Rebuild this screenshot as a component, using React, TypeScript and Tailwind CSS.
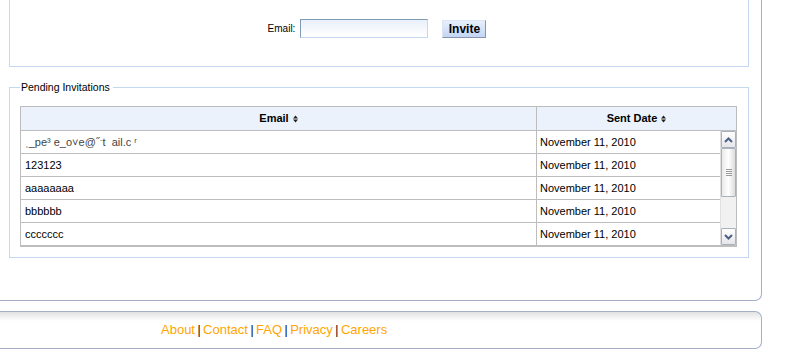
import React from "react";

function SortIcon() {
  return (
    <svg width="5" height="8" viewBox="0 0 5 8" className="inline-block ml-[4px] align-[-1px]">
      <path d="M2.5 0.5 L5 3.5 L0 3.5 Z" fill="#222" />
      <path d="M0 4.5 L5 4.5 L2.5 7.5 Z" fill="#222" />
    </svg>
  );
}

function Chevron({ up }: { up?: boolean }) {
  return (
    <svg width="9" height="6" viewBox="0 0 9 6">
      <path
        d={up ? "M1 5 L4.5 1.5 L8 5" : "M1 1 L4.5 4.5 L8 1"}
        fill="none"
        stroke="#4d6185"
        strokeWidth="2"
      />
    </svg>
  );
}

const rows = [
  "\u02cc_pe\u00b3 e_o\u02c5e@\u02dd\u02d1t\u00a0\u00a0ail.c\u00a0\u02b3",
  "123123",
  "aaaaaaaa",
  "bbbbbb",
  "ccccccc",
];

export default function App() {
  return (
    <div className="w-[789px] h-[361px] bg-white overflow-hidden font-['Liberation_Sans',Arial,sans-serif] text-[11px] text-black">
      <div className="w-[762px] border-r border-b border-[#a4b0c8] rounded-br-[7px] pl-[9px] pr-[12px] pb-[42px]">
        <div className="h-[67px] border-x border-b border-[#c5d7f2] flex items-start justify-center pt-[19px] pr-[4px]">
          <span className="mt-[3px] leading-[13px] text-[10px]">Email:</span>
          <input
            className="ml-[5px] w-[128px] h-[19px] border border-t-[#7f9db9] border-l-[#7f9db9] border-r-[#c5d7f2] border-b-[#c5d7f2] bg-gradient-to-b from-[#eaf0fa] to-white outline-none"
            type="text"
          />
          <button className="ml-[14px] mt-[1px] w-[44px] h-[18px] border border-t-[#dbe5f5] border-l-[#dbe5f5] border-r-[#8796b0] border-b-[#8796b0] bg-gradient-to-b from-[#e8effb] to-[#c3d6f4] font-bold text-[12px] leading-[14px] text-black">
            Invite
          </button>
        </div>

        <fieldset className="mt-[14px] border border-[#c5d7f2] pl-[10px] pr-[11px] pt-[12px] pb-[10px]">
          <legend className="pl-[1px] pr-[3px] leading-[13px] text-[10.5px]">Pending Invitations</legend>
          <div className="border border-[#bdbdbd] border-b-2">
            <div className="flex h-[24px] bg-[#ebf2fc] border-b border-[#bdbdbd] font-bold">
              <div className="w-[516px] flex items-center justify-center border-r border-[#bdbdbd]">
                Email
                <SortIcon />
              </div>
              <div className="flex-1 flex items-center justify-center">
                Sent Date
                <SortIcon />
              </div>
            </div>
            <div className="flex h-[114px]">
              <div className="flex-1">
                {rows.map((r, i) => (
                  <div
                    key={i}
                    className={`flex h-[23px] ${i < rows.length - 1 ? "border-b border-[#bdbdbd]" : "h-[22px]"}`}
                  >
                    <div className={`w-[516px] border-r border-[#bdbdbd] flex items-center pl-[4px] whitespace-pre ${i === 0 ? "text-[#444]" : ""}`}>
                      {r}
                    </div>
                    <div className="flex-1 flex items-center pl-[3px]">November 11, 2010</div>
                  </div>
                ))}
              </div>
              <div className="w-[16px] flex flex-col bg-[#f1f1f1] border-l border-[#e0e0e0]">
                <div className="h-[17px] flex items-center justify-center border border-[#a9b1bf] bg-gradient-to-b from-white to-[#e4e6ea] rounded-[1px]">
                  <Chevron up />
                </div>
                <div className="h-[49px] flex items-center justify-center border border-[#a9b1bf] bg-gradient-to-r from-[#e9e9e9] via-white to-[#dcdcdc] rounded-[1px]">
                  <div className="flex flex-col gap-[1px]">
                    <div className="w-[6px] h-px bg-[#9a9a9a]" />
                    <div className="w-[6px] h-px bg-[#9a9a9a]" />
                    <div className="w-[6px] h-px bg-[#9a9a9a]" />
                    <div className="w-[6px] h-px bg-[#9a9a9a]" />
                  </div>
                </div>
                <div className="flex-1" />
                <div className="h-[17px] flex items-center justify-center border border-[#a9b1bf] bg-gradient-to-b from-white to-[#e4e6ea] rounded-[1px]">
                  <Chevron />
                </div>
              </div>
            </div>
          </div>
        </fieldset>
      </div>

      <div className="mt-[10px] w-[762px] h-[38px] border-t border-r border-b border-[#a4b0c8] rounded-r-[7px] bg-gradient-to-b from-[#e2e2e2] via-white via-[25%] to-white flex items-center pl-[161px] text-[13px]">
        <a className="text-[#ffa500]">About</a>
        <span className="mx-[2.5px] text-[12px]">|</span>
        <a className="text-[#ffa500]">Contact</a>
        <span className="mx-[2.5px] text-[12px]">|</span>
        <a className="text-[#ffa500]">FAQ</a>
        <span className="mx-[2.5px] text-[12px]">|</span>
        <a className="text-[#ffa500]">Privacy</a>
        <span className="mx-[2.5px] text-[12px]">|</span>
        <a className="text-[#ffa500]">Careers</a>
      </div>
    </div>
  );
}
